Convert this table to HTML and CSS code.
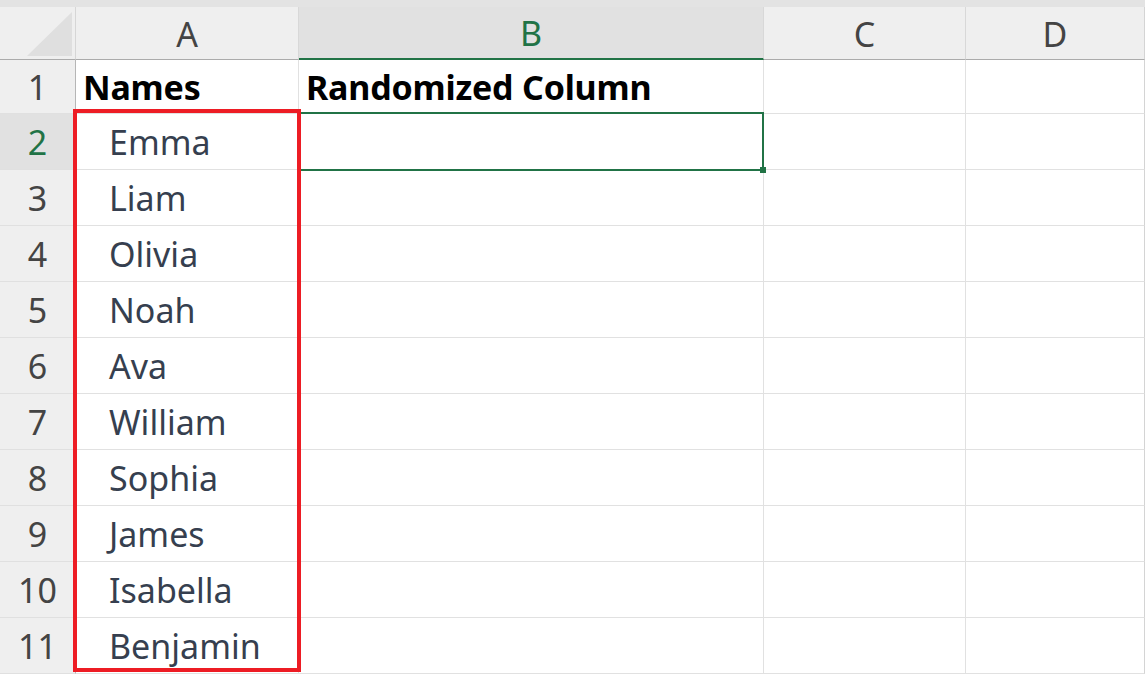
FILE: index.html
```html
<!DOCTYPE html>
<html>
<head>
<meta charset="utf-8">
<link rel="stylesheet" href="styles.css">
</head>
<body>
<div class="topstrip"></div>
<div class="sheet">
  <div class="corner"><svg class="corner-tri" width="45" height="44" viewBox="0 0 45 44"><polygon points="45,0 45,44 0,44" fill="#dfdfdf"/></svg></div>
  <div class="colhead">A</div>
  <div class="colhead sel">B</div>
  <div class="colhead">C</div>
  <div class="colhead last">D</div>

  <div class="rowhead">1</div>
  <div class="cell bold">Names</div>
  <div class="cell bold">Randomized Column</div>
  <div class="cell"></div>
  <div class="cell last"></div>

  <div class="rowhead sel">2</div>
  <div class="cell name">Emma</div>
  <div class="cell"></div>
  <div class="cell"></div>
  <div class="cell last"></div>

  <div class="rowhead">3</div>
  <div class="cell name">Liam</div>
  <div class="cell"></div>
  <div class="cell"></div>
  <div class="cell last"></div>

  <div class="rowhead">4</div>
  <div class="cell name">Olivia</div>
  <div class="cell"></div>
  <div class="cell"></div>
  <div class="cell last"></div>

  <div class="rowhead">5</div>
  <div class="cell name">Noah</div>
  <div class="cell"></div>
  <div class="cell"></div>
  <div class="cell last"></div>

  <div class="rowhead">6</div>
  <div class="cell name">Ava</div>
  <div class="cell"></div>
  <div class="cell"></div>
  <div class="cell last"></div>

  <div class="rowhead">7</div>
  <div class="cell name">William</div>
  <div class="cell"></div>
  <div class="cell"></div>
  <div class="cell last"></div>

  <div class="rowhead">8</div>
  <div class="cell name">Sophia</div>
  <div class="cell"></div>
  <div class="cell"></div>
  <div class="cell last"></div>

  <div class="rowhead">9</div>
  <div class="cell name">James</div>
  <div class="cell"></div>
  <div class="cell"></div>
  <div class="cell last"></div>

  <div class="rowhead">10</div>
  <div class="cell name">Isabella</div>
  <div class="cell"></div>
  <div class="cell"></div>
  <div class="cell last"></div>

  <div class="rowhead">11</div>
  <div class="cell name">Benjamin</div>
  <div class="cell"></div>
  <div class="cell"></div>
  <div class="cell last"></div>

  <div class="highlight"></div>
  <div class="selection"><span class="handle"></span></div>
</div>
</body>
</html>
```

FILE: styles.css
```css
html, body {
  margin: 0;
  padding: 0;
  background: #ffffff;
  overflow: hidden;
}
body {
  width: 1145px;
  height: 676px;
  font-family: "Noto Sans", "Open Sans", sans-serif;
}
.topstrip {
  height: 7px;
  background: #e3e3e3;
}
.sheet {
  display: grid;
  grid-template-columns: 76px 223px 465px 202px 179px;
  grid-template-rows: 53px 54px repeat(10, 56px);
  position: relative;
}
.corner {
  background: #efefef;
  border-right: 1px solid #d6d6d6;
  border-bottom: 1px solid #ababab;
  display: flex;
  align-items: flex-start;
  justify-content: flex-end;
  padding: 5px 3px 0 0;
}
.corner-tri { display: block; }
.colhead {
  background: #efefef;
  border-right: 1px solid #d8d8d8;
  border-bottom: 1px solid #ababab;
  color: #444444;
  font-size: 34px;
  display: flex;
  align-items: center;
  justify-content: center;
  padding-top: 1px;
}
.colhead.sel {
  background: #e1e1e1;
  color: #217346;
  border-bottom: 2px solid #217346;
}
.colhead.last { border-right-color: #d4d4d4; }
.rowhead {
  background: #efefef;
  border-right: 1px solid #b6b6b6;
  border-bottom: 1px solid #e0e0e0;
  color: #444444;
  font-size: 34px;
  display: flex;
  align-items: center;
  justify-content: center;
  padding-top: 1px;
}
.rowhead.sel {
  background: #e1e1e1;
  color: #217346;
}
.cell {
  border-right: 1px solid #e1e1e1;
  border-bottom: 1px solid #e1e1e1;
  display: flex;
  align-items: center;
  padding-top: 1px;
  font-size: 34px;
  white-space: nowrap;
  overflow: visible;
}
.cell.bold {
  font-weight: 700;
  color: #000000;
  padding-left: 7px;
  letter-spacing: -0.2px;
}
.cell.name {
  color: #363f4f;
  padding-left: 33px;
}
.cell.last { border-right-color: #d4d4d4; }
.highlight {
  position: absolute;
  grid-column: 2 / 3;
  grid-row: 3 / 13;
  top: -5px;
  left: -3px;
  right: -2px;
  bottom: 2px;
  border: 4px solid #ed1c24;
  pointer-events: none;
  z-index: 2;
}
.selection {
  position: absolute;
  grid-column: 3 / 4;
  grid-row: 3 / 4;
  top: -2px;
  left: -2px;
  right: 0;
  bottom: -1px;
  border: 2px solid #217346;
  z-index: 1;
}
.handle {
  position: absolute;
  right: -4px;
  bottom: -4px;
  width: 6px;
  height: 6px;
  background: #217346;
}
```
